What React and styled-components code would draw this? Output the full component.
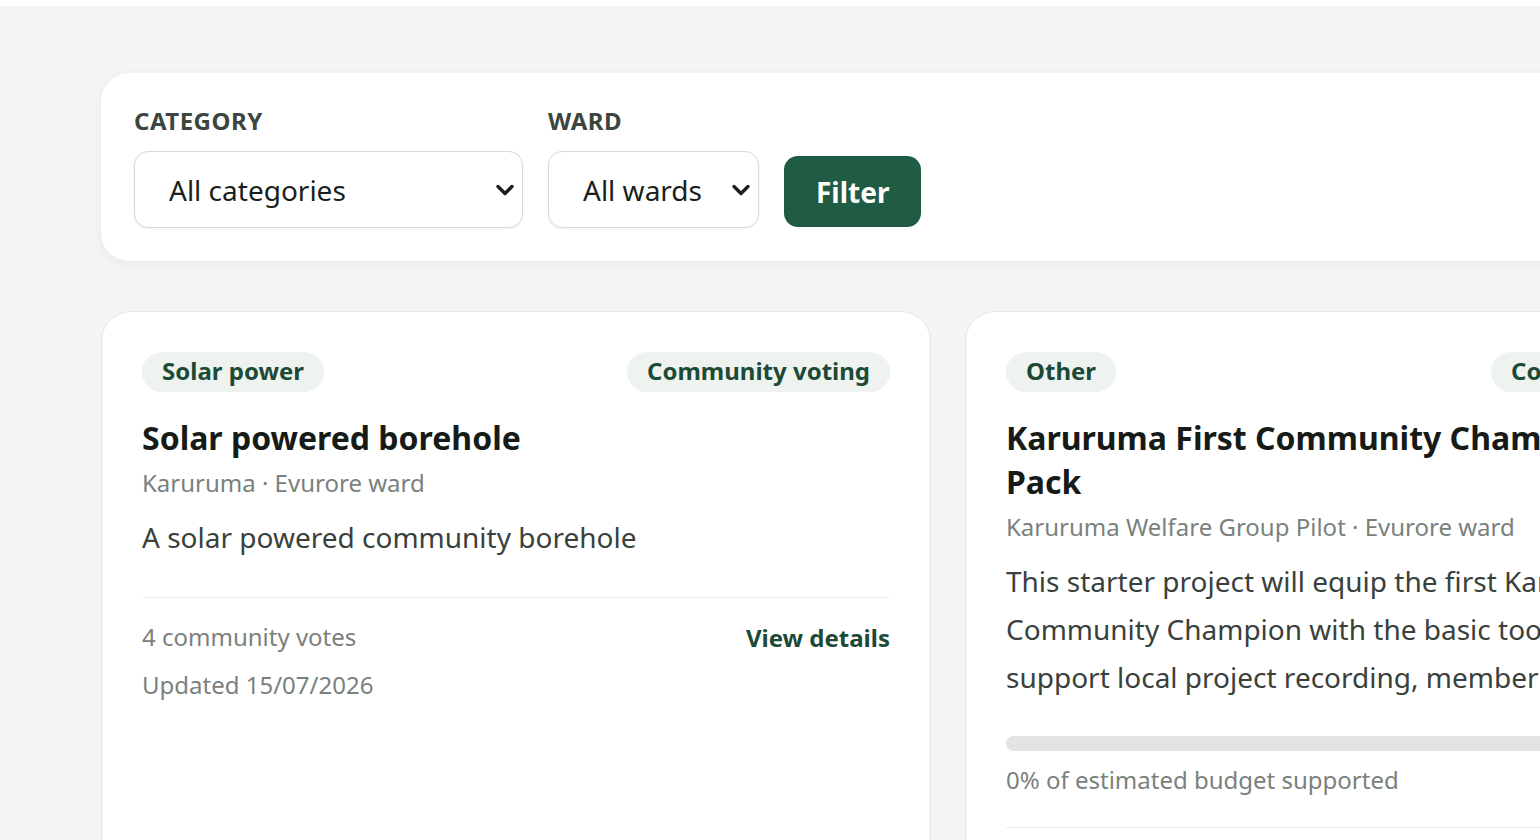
import styled, { createGlobalStyle } from "styled-components";

const GlobalStyle = createGlobalStyle`
  html, body {
    margin: 0;
    padding: 0;
    background: #ffffff;
  }
  body {
    font-family: "Noto Sans", "Open Sans", sans-serif;
    color: #1a1f1c;
  }
  * {
    box-sizing: border-box;
  }
`;

const Page = styled.div`
  margin-top: 6px;
  min-height: 834px;
  background-color: #f3f5f2;
  padding: 67px 0 0 101px;
  overflow: hidden;
`;

const FilterPanel = styled.form`
  display: flex;
  align-items: flex-end;
  gap: 25px;
  width: 1500px;
  padding: 32px 33px 33px;
  background-color: #fff;
  border-radius: 28px;
  box-shadow: 0 2px 8px rgba(20, 40, 30, 0.06);
`;

const Field = styled.div`
  display: flex;
  flex-direction: column;
  gap: 14px;
`;

const FieldLabel = styled.label`
  font-size: 24px;
  font-weight: 700;
  letter-spacing: 0.5px;
  color: #3b4640;
  text-transform: uppercase;
  line-height: 32px;
`;

const SelectWrap = styled.div`
  position: relative;
  width: ${(p) => p.$width}px;
`;

const Select = styled.select`
  appearance: none;
  width: 100%;
  height: 77px;
  padding: 0 50px 0 34px;
  font-family: inherit;
  font-size: 28px;
  color: #1a1f1c;
  background: #fff;
  border: 1.5px solid #d7d9d7;
  border-radius: 14px;
  box-shadow: 0 1px 2px rgba(0, 0, 0, 0.06);
  outline: none;
`;

const Chevron = styled.svg`
  position: absolute;
  right: 8px;
  top: 50%;
  transform: translateY(-50%);
  pointer-events: none;
`;

const FilterButton = styled.button`
  height: 71px;
  margin-bottom: 1px;
  padding: 0 32px;
  font-family: inherit;
  font-size: 28px;
  font-weight: 700;
  color: #fff;
  background-color: #1f5c43;
  border: none;
  border-radius: 14px;
  cursor: pointer;
`;

const Grid = styled.div`
  display: grid;
  grid-template-columns: 830px 830px;
  gap: 34px;
  margin-top: 50px;
`;

const Card = styled.article`
  display: flex;
  flex-direction: column;
  min-height: 600px;
  padding: 40px 40px 0;
  background-color: #fff;
  border: 1.5px solid #e3e6e3;
  border-radius: 30px;
`;

const TagRow = styled.div`
  display: flex;
  justify-content: space-between;
  align-items: center;
`;

const Tag = styled.span`
  display: inline-flex;
  align-items: center;
  height: 40px;
  padding: 0 20px 3px;
  font-size: 24px;
  font-weight: 700;
  color: #1d4a36;
  background-color: #eef3f0;
  border-radius: 999px;
  white-space: nowrap;
`;

const Title = styled.h3`
  margin: 24px 0 0;
  font-size: 32px;
  font-weight: 700;
  line-height: 44px;
  color: #161b18;
`;

const Meta = styled.p`
  margin: 1px 0 0;
  font-size: 24px;
  line-height: 44px;
  color: #7a817d;
`;

const Description = styled.p`
  margin: 8px 0 0;
  font-size: 28px;
  line-height: 48px;
  color: #39413d;
`;

const Progress = styled.div`
  height: 15px;
  margin-top: 35px;
  background-color: #e3e3e3;
  border-radius: 999px;
  overflow: hidden;
`;

const ProgressFill = styled.div`
  height: 100%;
  background-color: #1f5c43;
`;

const ProgressText = styled.p`
  margin: 12px 0 0;
  font-size: 24px;
  line-height: 34px;
  color: #7a817d;
`;

const Divider = styled.hr`
  margin: ${(p) => (p.$tight ? 30 : 36)}px 0 0;
  border: none;
  border-top: 1.5px solid #ebedeb;
`;

const Footer = styled.div`
  display: flex;
  flex-direction: column;
  gap: 12px;
  padding-top: 21px;
`;

const FooterRow = styled.div`
  display: flex;
  justify-content: space-between;
  align-items: center;
`;

const Muted = styled.span`
  font-size: 24px;
  line-height: 36px;
  color: #7a817d;
`;

const DetailsLink = styled.a`
  font-size: 24px;
  font-weight: 700;
  color: #1d4a36;
  text-decoration: none;
`;

const ChevronIcon = () => (
  <Chevron width="20" height="14" viewBox="0 0 20 14" fill="none">
    <path
      d="M3 3.5l7 7 7-7"
      stroke="#1a1f1c"
      strokeWidth="3.4"
      strokeLinecap="round"
      strokeLinejoin="round"
    />
  </Chevron>
);

const projects = [
  {
    id: 1,
    category: "Solar power",
    status: "Community voting",
    title: "Solar powered borehole",
    meta: "Karuruma · Evurore ward",
    description: "A solar powered community borehole",
    votes: 4,
    updated: "15/07/2026",
  },
  {
    id: 2,
    category: "Other",
    status: "Community voting",
    title: "Karuruma First Community Champion Toolkit Pack",
    meta: "Karuruma Welfare Group Pilot · Evurore ward",
    description:
      "This starter project will equip the first Karuruma Community Champion with the basic tools needed to support local project recording, member engagement.",
    budget: 0,
    votes: 0,
    updated: "15/07/2026",
  },
];

const ProjectCard = ({ project }) => {
  const hasBudget = project.budget !== undefined;
  return (
    <Card>
      <TagRow>
        <Tag>{project.category}</Tag>
        <Tag>{project.status}</Tag>
      </TagRow>
      <Title>{project.title}</Title>
      <Meta>{project.meta}</Meta>
      <Description>{project.description}</Description>
      {hasBudget && (
        <>
          <Progress>
            <ProgressFill style={{ width: `${project.budget}%` }} />
          </Progress>
          <ProgressText>{project.budget}% of estimated budget supported</ProgressText>
        </>
      )}
      <Divider $tight={hasBudget} />
      <Footer>
        <FooterRow>
          <Muted>{project.votes} community votes</Muted>
          <DetailsLink href="#">View details</DetailsLink>
        </FooterRow>
        <Muted>Updated {project.updated}</Muted>
      </Footer>
    </Card>
  );
};

const App = () => {
  return (
    <>
      <GlobalStyle />
      <Page>
        <FilterPanel onSubmit={(e) => e.preventDefault()}>
          <Field>
            <FieldLabel htmlFor="category">Category</FieldLabel>
            <SelectWrap $width={389}>
              <Select id="category" defaultValue="">
                <option value="">All categories</option>
                <option value="solar">Solar power</option>
                <option value="other">Other</option>
              </Select>
              <ChevronIcon />
            </SelectWrap>
          </Field>
          <Field>
            <FieldLabel htmlFor="ward">Ward</FieldLabel>
            <SelectWrap $width={211}>
              <Select id="ward" defaultValue="">
                <option value="">All wards</option>
                <option value="evurore">Evurore</option>
              </Select>
              <ChevronIcon />
            </SelectWrap>
          </Field>
          <FilterButton type="submit">Filter</FilterButton>
        </FilterPanel>
        <Grid>
          {projects.map((p) => (
            <ProjectCard key={p.id} project={p} />
          ))}
        </Grid>
      </Page>
    </>
  );
};

export default App;
